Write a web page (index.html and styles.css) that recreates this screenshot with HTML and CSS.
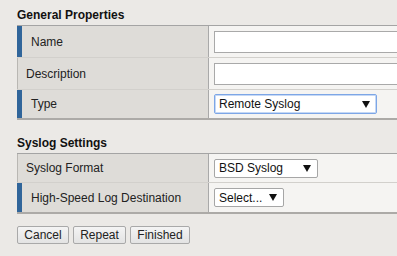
FILE: index.html
```html
<!DOCTYPE html>
<html>
<head>
<meta charset="utf-8">
<link rel="stylesheet" href="styles.css">
</head>
<body>
<div class="page">
  <div class="heading">General Properties</div>
  <div class="table">
    <div class="row r31">
      <div class="label req">Name</div>
      <div class="value"><span class="input"></span></div>
    </div>
    <div class="row r31">
      <div class="label">Description</div>
      <div class="value"><span class="input"></span></div>
    </div>
    <div class="row r28 last">
      <div class="label req">Type</div>
      <div class="value"><span class="select focus w163"><span>Remote Syslog</span><svg class="arrow" width="8" height="7" viewBox="0 0 8 7"><polygon points="0,0 8,0 4,7" fill="#111"/></svg></span></div>
    </div>
  </div>

  <div class="heading second">Syslog Settings</div>
  <div class="table">
    <div class="row r28">
      <div class="label">Syslog Format</div>
      <div class="value"><span class="select w104"><span>BSD Syslog</span><svg class="arrow" width="8" height="7" viewBox="0 0 8 7"><polygon points="0,0 8,0 4,7" fill="#111"/></svg></span></div>
    </div>
    <div class="row r29 last">
      <div class="label req">High-Speed Log Destination</div>
      <div class="value"><span class="select w70"><span>Select...</span><svg class="arrow" width="8" height="7" viewBox="0 0 8 7"><polygon points="0,0 8,0 4,7" fill="#111"/></svg></span></div>
    </div>
  </div>

  <div class="buttons">
    <button class="btn w52">Cancel</button>
    <button class="btn w53">Repeat</button>
    <button class="btn w60">Finished</button>
  </div>
</div>
</body>
</html>
```

FILE: styles.css
```css
html, body {
  margin: 0;
  padding: 0;
  background: #ebe9e6;
  overflow: hidden;
}
body {
  width: 397px;
  height: 256px;
  font-family: "Liberation Sans", Arial, sans-serif;
  font-size: 12px;
  color: #222;
}
.page {
  padding: 8px 0 0 17px;
  width: 380px;
  height: 248px;
  overflow: hidden;
}
.heading {
  font-weight: bold;
  line-height: 14px;
  height: 14px;
  margin-bottom: 3px;
  color: #111;
}
.heading.second {
  margin-top: 16px;
}
.table {
  border-top: 1px solid #a4a4a4;
  border-bottom: 2px solid #acaaa7;
}
.row {
  display: flex;
  border-bottom: 1px solid #d2d0cc;
}
.row.last {
  border-bottom: none;
}
.r31 { height: 31px; }
.r28 { height: 28px; }
.r29 { height: 29px; }
.label {
  width: 182px;
  flex: none;
  background: #dedcd8;
  border-left: 1px solid #b9b7b3;
  border-right: 1px solid #a9a9a9;
  padding-left: 8px;
  display: flex;
  align-items: center;
}
.label.req {
  border-left: 5px solid #30659a;
  padding-left: 9px;
  width: 177px;
}
.value {
  flex: 1;
  min-width: 0;
  overflow: hidden;
  background: #f5f4f2;
  padding-left: 5px;
  display: flex;
  align-items: center;
}
.input {
  display: block;
  flex: none;
  width: 220px;
  height: 20px;
  background: #fff;
  border: 1px solid #a9a9a9;
  box-sizing: content-box;
}
.select {
  display: flex;
  flex: none;
  align-items: center;
  justify-content: space-between;
  box-sizing: border-box;
  height: 19px;
  background: #fff;
  border: 1px solid #a6a6a6;
  border-radius: 2px;
  padding: 0 6px 0 4px;
  color: #111;
  font-size: 12px;
}
.select.focus {
  height: 20px;
  border-color: #7da6e6;
  box-shadow: 0 0 0 1px #c5d8f5 inset;
}
.w163 { width: 163px; }
.w104 { width: 104px; }
.w70 { width: 70px; }
.arrow {
  display: block;
  flex: none;
}
.buttons {
  display: flex;
  gap: 4px;
  margin-top: 12px;
}
.btn {
  font-family: "Liberation Sans", Arial, sans-serif;
  font-size: 12px;
  color: #222;
  height: 18px;
  padding: 0;
  border: 1px solid #a9a9a9;
  border-radius: 2px;
  background: linear-gradient(#f4f4f4, #e3e3e3);
  line-height: 16px;
}
.w52 { width: 52px; }
.w53 { width: 53px; }
.w60 { width: 60px; }
```
